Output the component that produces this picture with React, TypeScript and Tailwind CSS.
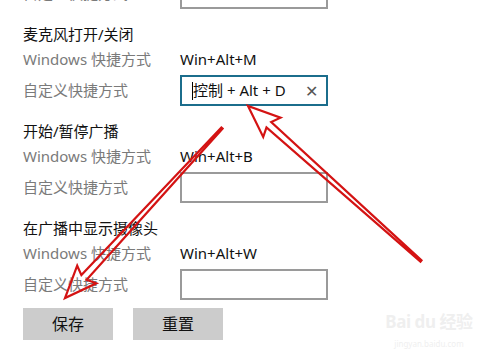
import React from 'react';

type Pt = [number, number];

// outline arrow: narrow shaft from tail, open head at tip
function arrowPoints(tail: Pt, tip: Pt, headLen = 28, headW = 13, shaftW = 3.5) {
  const dx = tip[0] - tail[0];
  const dy = tip[1] - tail[1];
  const len = Math.hypot(dx, dy);
  const ux = dx / len;
  const uy = dy / len;
  const nx = -uy;
  const ny = ux;
  const bx = tip[0] - ux * headLen;
  const by = tip[1] - uy * headLen;
  const pts: Pt[] = [
    [tail[0] + nx * 0.8, tail[1] + ny * 0.8],
    [bx + nx * shaftW, by + ny * shaftW],
    [bx + nx * headW - ux * 4, by + ny * headW - uy * 4],
    tip,
    [bx - nx * headW - ux * 4, by - ny * headW - uy * 4],
    [bx - nx * shaftW, by - ny * shaftW],
    [tail[0] - nx * 0.8, tail[1] - ny * 0.8],
  ];
  return pts.map((p) => `${p[0].toFixed(1)},${p[1].toFixed(1)}`).join(' ');
}

function ShortcutInput({ value, focused }: { value?: string; focused?: boolean }) {
  return (
    <div
      className={
        focused
          ? 'flex h-[31px] w-[148px] items-center border-2 border-[#1b6d8c] bg-white pl-[10px] pr-[8px]'
          : 'h-[31px] w-[148px] border-2 border-[#9a9a9a] bg-white'
      }
    >
      {focused && (
        <>
          <span className="h-[18px] w-px bg-black" />
          <span className="flex-1 text-[15px] text-[#111]">{value}</span>
          <span className="text-[16px] leading-none text-[#555]">✕</span>
        </>
      )}
    </div>
  );
}

function CustomRow({ value, focused }: { value?: string; focused?: boolean }) {
  return (
    <div className="mt-[3px] flex items-center">
      <span className="w-[157px] text-[15px] text-[#7a7a7a]">自定义快捷方式</span>
      <ShortcutInput value={value} focused={focused} />
    </div>
  );
}

function Section({ title, win, value, focused }: { title: string; win: string; value?: string; focused?: boolean }) {
  return (
    <div className="mt-[13px]">
      <div className="flex h-[24px] items-center text-[15px] text-[#111]">{title}</div>
      <div className="flex h-[26px] items-center text-[15px]">
        <span className="w-[157px] text-[#7a7a7a]">Windows 快捷方式</span>
        <span className="text-[#111]">{win}</span>
      </div>
      <CustomRow value={value} focused={focused} />
    </div>
  );
}

export default function App() {
  return (
    <div
      className="relative h-[361px] w-[502px] overflow-hidden bg-white"
      style={{ fontFamily: '"Noto Sans", "Noto Sans CJK SC", sans-serif' }}
    >
      <div className="pl-[23px]">
        <div className="-mt-[25px]">
          <CustomRow />
        </div>
        <Section title="麦克风打开/关闭" win="Win+Alt+M" value="控制 + Alt + D" focused />
        <Section title="开始/暂停广播" win="Win+Alt+B" />
        <Section title="在广播中显示摄像头" win="Win+Alt+W" />
        <div className="mt-[8px] flex gap-[20px]">
          <button className="h-[32px] w-[90px] bg-[#cccccc] text-[16px] text-[#111]">保存</button>
          <button className="h-[32px] w-[90px] bg-[#cccccc] text-[16px] text-[#111]">重置</button>
        </div>
      </div>

      {/* baidu watermark */}
      <div className="pointer-events-none absolute left-[383px] top-[311px] flex w-[92px] flex-col items-center whitespace-nowrap text-[#efefef]">
        <span className="text-[17px] font-bold leading-[22px] tracking-tight">Bai du 经验</span>
        <span className="mt-[6px] text-[8px] leading-[9px]">jingyan.baidu.com</span>
      </div>

      <svg className="pointer-events-none absolute left-0 top-0" width="502" height="361">
        <polygon
          points={arrowPoints([421, 261], [248, 106])}
          fill="none"
          stroke="#d41313"
          strokeWidth="2.2"
          strokeLinejoin="miter"
        />
        <polygon
          points={arrowPoints([222, 128], [65, 298])}
          fill="none"
          stroke="#d41313"
          strokeWidth="2.2"
          strokeLinejoin="miter"
        />
      </svg>
    </div>
  );
}
